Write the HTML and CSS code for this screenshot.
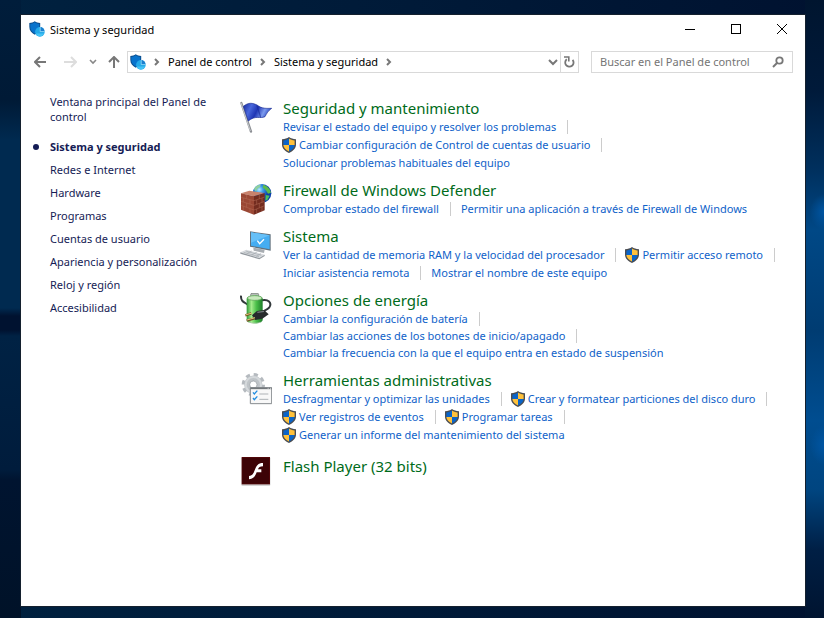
FILE: index.html
```html
<!DOCTYPE html>
<html lang="es">
<head>
<meta charset="utf-8">
<title>Sistema y seguridad</title>
<meta name="viewport" content="width=device-width, initial-scale=1">
<link rel="stylesheet" href="styles.css">
</head>
<body>
<svg class="defs" aria-hidden="true">
  <symbol id="uac" viewBox="0 0 14 16">
    <path d="M7 0C5 1.400 3 2 0 2.200V7.500C0 11.500 3 14.300 7 16C11 14.300 14 11.500 14 7.500V2.200C11 2 9 1.400 7 0Z" fill="#4a4d52"/>
    <path d="M7 1.500V8H1.400V3.400C3.700 3.200 5.500 2.600 7 1.500Z" fill="#0a64c8"/>
    <path d="M7 1.500V8H12.600V3.400C10.300 3.200 8.500 2.600 7 1.500Z" fill="#ffc13b"/>
    <path d="M1.400 8H7V14.500C3.800 13 1.600 11 1.400 8Z" fill="#ffc13b"/>
    <path d="M12.600 8H7V14.500C10.200 13 12.400 11 12.600 8Z" fill="#0a64c8"/>
  </symbol>
  <symbol id="security" viewBox="0 0 48 50">
    <path d="M17 1C12 5 7 6 0 6V18C0 30 7 38 17 43C27 38 34 30 34 18V6C27 6 22 5 17 1Z" fill="#0b4f8f"/>
    <path d="M17 4C12 8 8 9 3 9V18C3 28 9 35 17 39C25 35 31 28 31 18V9C26 9 22 8 17 4Z" fill="#0873cc"/>
    <circle cx="33" cy="34" r="15" fill="#23a9e8"/>
    <path d="M20 39A14 14 0 0 0 46 39Z" fill="#45c3f5"/>
    <path d="M35 32V19A14 14 0 0 1 47 32Z" fill="#1b7fce"/>
    <path d="M34 19V33H47" fill="none" stroke="#b5e6fb" stroke-width="2"/>
  </symbol>
  <symbol id="chevron" viewBox="0 0 6 8">
    <path d="M1 1L4 4L1 7" fill="none" stroke="#777" stroke-width="2"/>
  </symbol>
</svg>

<div class="window">
  <header class="titlebar">
    <svg class="app-icon"><use href="#security"/></svg>
    <h1 class="title">Sistema y seguridad</h1>
    <div class="captions">
      <button type="button" aria-label="Minimizar"><svg width="10" height="10" viewBox="0 0 10 10"><path d="M0 5.500H10" stroke="#000"/></svg></button>
      <button type="button" aria-label="Maximizar"><svg width="10" height="10" viewBox="0 0 10 10"><rect x=".5" y=".5" width="9" height="9" fill="none" stroke="#000"/></svg></button>
      <button type="button" aria-label="Cerrar"><svg width="10" height="10" viewBox="0 0 10 10"><path d="M0 0L10 10M10 0L0 10" stroke="#000"/></svg></button>
    </div>
  </header>

  <nav class="toolbar" aria-label="Navegación">
    <div class="history">
      <button type="button" class="wide" aria-label="Atrás"><svg width="13" height="12" viewBox="0 0 13 12"><path d="M1 6H12M6 1L1 6L6 11" fill="none" stroke="#777" stroke-width="2"/></svg></button>
      <button type="button" class="wide" aria-label="Adelante"><svg width="13" height="12" viewBox="0 0 13 12"><path d="M0 6H12M7 1L12 6L7 11" fill="none" stroke="#ddd" stroke-width="2"/></svg></button>
      <button type="button" class="narrow" aria-label="Ubicaciones recientes"><svg width="8" height="6" viewBox="0 0 8 6"><path d="M1 1L4 4L7 1" fill="none" stroke="#888" stroke-width="1.600"/></svg></button>
      <button type="button" class="medium" aria-label="Subir"><svg width="12" height="13" viewBox="0 0 12 13"><path d="M6 12V1M1 6L6 1L11 6" fill="none" stroke="#777" stroke-width="2"/></svg></button>
    </div>
    <div class="address">
      <svg class="app-icon"><use href="#security"/></svg>
      <svg class="chev"><use href="#chevron"/></svg>
      <a href="#panel">Panel de control</a>
      <svg class="chev"><use href="#chevron"/></svg>
      <a href="#seguridad">Sistema y seguridad</a>
      <svg class="chev"><use href="#chevron"/></svg>
      <button type="button" class="drop" aria-label="Ubicaciones anteriores"><svg width="10" height="7" viewBox="0 0 10 7"><path d="M1 1L5 5L9 1" fill="none" stroke="#777" stroke-width="2"/></svg></button>
      <button type="button" class="refresh" aria-label="Actualizar"><svg width="11" height="12" viewBox="0 0 11 12"><path d="M2.800 3.200A4.200 4.200 0 1 0 8.600 3.800" fill="none" stroke="#777" stroke-width="1.800"/><path d="M0 1H4.800V5.600" fill="none" stroke="#777" stroke-width="1.600"/></svg></button>
    </div>
    <label class="search">
      <input type="search" placeholder="Buscar en el Panel de control" aria-label="Buscar en el Panel de control">
      <svg width="12" height="12" viewBox="0 0 12 12"><circle cx="7.500" cy="4.500" r="3.200" fill="none" stroke="#777" stroke-width="1.800"/><path d="M5 7L1 11" stroke="#777" stroke-width="2"/></svg>
    </label>
  </nav>

  <div class="content">
    <aside class="sidebar">
      <a class="home" href="#panel">Ventana principal del Panel de control</a>
      <ul>
        <li class="current"><a href="#seguridad">Sistema y seguridad</a></li>
        <li><a href="#redes">Redes e Internet</a></li>
        <li><a href="#hardware">Hardware</a></li>
        <li><a href="#programas">Programas</a></li>
        <li><a href="#cuentas">Cuentas de usuario</a></li>
        <li><a href="#apariencia">Apariencia y personalización</a></li>
        <li><a href="#reloj">Reloj y región</a></li>
        <li><a href="#accesibilidad">Accesibilidad</a></li>
      </ul>
    </aside>

    <main class="categories">
      <section class="category">
        <svg class="icon" viewBox="24 30 96 96">
          <defs><linearGradient id="flag" x1="0" x2="1" y1="0" y2=".3"><stop offset="0" stop-color="#16299b"/><stop offset=".3" stop-color="#4a68dc"/><stop offset=".55" stop-color="#1f35b4"/><stop offset=".8" stop-color="#7d9bee"/><stop offset="1" stop-color="#2a48c4"/></linearGradient></defs>
          <path d="M28 36L57 122" stroke="#8c8f94" stroke-width="7" stroke-linecap="round"/>
          <path d="M27 36L55 120" stroke="#e3e5e8" stroke-width="2"/>
          <path d="M34 46C50 33 62 36 75 42C90 54 104 52 119 52C108 60 105 66 99 77C84 84 70 72 49 90Z" fill="url(#flag)" stroke="#1a2c92" stroke-width="2"/>
          <path d="M75 44C79 58 83 68 86 79" fill="none" stroke="#182a9a" stroke-width="4" opacity=".6"/>
        </svg>
        <div class="body">
          <h2><a href="#mantenimiento">Seguridad y mantenimiento</a></h2>
          <p class="row"><a href="#t1">Revisar el estado del equipo y resolver los problemas</a><i></i></p>
          <p class="row"><a class="uac" href="#t2"><svg><use href="#uac"/></svg>Cambiar configuración de Control de cuentas de usuario</a><i></i></p>
          <p class="row"><a href="#t3">Solucionar problemas habituales del equipo</a></p>
        </div>
      </section>

      <section class="category">
        <svg class="icon" viewBox="24 272 96 96">
          <defs><radialGradient id="globe" cx=".35" cy=".3"><stop offset="0" stop-color="#b8eaff"/><stop offset=".4" stop-color="#3e9fe8"/><stop offset="1" stop-color="#0a3fac"/></radialGradient></defs>
          <circle cx="90" cy="303" r="28" fill="url(#globe)"/>
          <path d="M66 290C70 281 78 277 86 277L84 284L76 290L72 298Z" fill="#8fd0a0"/>
          <path d="M94 277C106 280 115 290 117 301L108 304L103 296L98 290L92 286Z" fill="#5cba4c"/>
          <path d="M101 308L113 310L106 323L100 325Z" fill="#4fc05c"/>
          <path d="M27 303L52 295L98 302L66 312Z" fill="#c9826c"/>
          <path d="M27 303L66 312V367L27 352Z" fill="#9a4734"/>
          <path d="M66 312L98 302V354L66 367Z" fill="#732c1f"/>
          <path d="M27 315L66 325L98 314M27 327L66 339L98 327M27 339L66 353L98 340M44 307V319M34 317V329M54 322V335M44 332V345M34 342V355M54 349V362M82 307V320M74 323V336M90 317V330M82 333V346M74 350V363M90 343V357" fill="none" stroke="#b46c57" stroke-width="1.500"/>
        </svg>
        <div class="body">
          <h2><a href="#firewall">Firewall de Windows Defender</a></h2>
          <p class="row"><a href="#t4">Comprobar estado del firewall</a><i></i><a href="#t5">Permitir una aplicación a través de Firewall de Windows</a></p>
        </div>
      </section>

      <section class="category">
        <svg class="icon" viewBox="24 21 96 96">
          <path d="M64 77L98 83L96 93L65 86Z" fill="#a8adb2"/>
          <path d="M54 28L116 37V86L54 74Z" fill="#62717d"/>
          <path d="M57 31L113 40V82L57 71Z" fill="#45adf2"/>
          <path d="M57 31L113 40L57 62Z" fill="#66c0f8"/>
          <path d="M76 56L83 65L96 52" fill="none" stroke="#fff" stroke-width="4"/>
          <path d="M25 91L43 83L98 98L82 108Z" fill="#d9dce0"/>
          <path d="M25 91V95L82 112L98 102V98L82 108Z" fill="#92989e"/>
          <path d="M35 91L81 104M41 87L88 100M44 95L59 87M59 99L74 91M73 103L87 95" stroke="#a3a9ae" stroke-width="2"/>
        </svg>
        <div class="body">
          <h2><a href="#sistema">Sistema</a></h2>
          <p class="row"><a href="#t6">Ver la cantidad de memoria RAM y la velocidad del procesador</a><i></i><a class="uac" href="#t7"><svg><use href="#uac"/></svg>Permitir acceso remoto</a><i></i></p>
          <p class="row"><a href="#t8">Iniciar asistencia remota</a><i></i><a href="#t9">Mostrar el nombre de este equipo</a></p>
        </div>
      </section>

      <section class="category compact">
        <svg class="icon" viewBox="24 213 96 96">
          <defs><linearGradient id="cell"><stop offset="0" stop-color="#2f9a35"/><stop offset=".3" stop-color="#a4ec8c"/><stop offset=".6" stop-color="#4cc04a"/><stop offset="1" stop-color="#1c7d28"/></linearGradient></defs>
          <path d="M27 221C26 238 36 240 47 248M90 235C108 231 121 242 112 256C106 264 98 264 92 270" fill="none" stroke="#32383b" stroke-width="6"/>
          <rect x="56" y="214" width="24" height="12" rx="4" fill="#b7bdb9" stroke="#69716c" stroke-width="2"/>
          <path d="M44 230C46 217 90 217 92 230V294C90 308 46 308 44 294Z" fill="url(#cell)"/>
          <ellipse cx="68" cy="228" rx="22" ry="7" fill="#c8e9bd" stroke="#589f52" stroke-width="2"/>
          <path d="M46 298C56 304 80 304 90 298C86 307 50 307 46 298Z" fill="#b9c2ba"/>
          <path d="M60 280L75 267L96 264L110 277L91 290L70 294Z" fill="#272b2c"/>
          <path d="M76 271L96 268" stroke="#747c7e" stroke-width="4"/>
          <path d="M58 274L40 280M68 289L44 296" stroke="#6c5424" stroke-width="7"/>
          <path d="M60 273L40 279M69 287L45 294" stroke="#e3c97d" stroke-width="3"/>
        </svg>
        <div class="body">
          <h2><a href="#energia">Opciones de energía</a></h2>
          <p class="row"><a href="#t10">Cambiar la configuración de batería</a><i></i></p>
          <p class="row"><a href="#t11">Cambiar las acciones de los botones de inicio/apagado</a><i></i></p>
          <p class="row"><a href="#t12">Cambiar la frecuencia con la que el equipo entra en estado de suspensión</a></p>
        </div>
      </section>

      <section class="category">
        <svg class="icon" viewBox="24 24 96 96">
          <circle cx="64" cy="59" r="29" fill="none" stroke="#b5babf" stroke-width="12" stroke-dasharray="12 10.800"/>
          <circle cx="64" cy="59" r="19" fill="none" stroke="#bfc4c8" stroke-width="17"/>
          <circle cx="64" cy="59" r="23" fill="none" stroke="#d5d9dc" stroke-width="6"/>
          <circle cx="64" cy="59" r="11" fill="#fff" stroke="#8c9399" stroke-width="2"/>
          <path d="M55 68H119V116H55Z" fill="#f8f8f8" stroke="#858a8e" stroke-width="3"/>
          <path d="M55 70H119" stroke="#73787c" stroke-width="5"/>
          <path d="M107 70H110M114 70H117" stroke="#fff" stroke-width="2"/>
          <path d="M63 82L67 87L76 77M63 99L67 104L76 94" fill="none" stroke="#238ee0" stroke-width="4"/>
          <path d="M82 87H109M82 103H109" stroke="#aeb2b6" stroke-width="3"/>
        </svg>
        <div class="body">
          <h2><a href="#herramientas">Herramientas administrativas</a></h2>
          <p class="row"><a href="#t13">Desfragmentar y optimizar las unidades</a><i></i><a class="uac" href="#t14"><svg><use href="#uac"/></svg>Crear y formatear particiones del disco duro</a><i></i></p>
          <p class="row"><a class="uac" href="#t15"><svg><use href="#uac"/></svg>Ver registros de eventos</a><i></i><a class="uac" href="#t16"><svg><use href="#uac"/></svg>Programar tareas</a><i></i></p>
          <p class="row"><a class="uac" href="#t17"><svg><use href="#uac"/></svg>Generar un informe del mantenimiento del sistema</a></p>
        </div>
      </section>

      <section class="category single">
        <svg class="icon" viewBox="24 267 96 96">
          <rect x="28" y="274" width="87" height="85" rx="3" fill="#000" opacity=".22"/>
          <rect x="29" y="273" width="85" height="82" fill="#5b0a0c"/>
          <rect x="31" y="275" width="81" height="78" fill="#3d0306"/>
          <path d="M93 291V301C84 301 80 305 78 310H88V319H74C69 333 63 339 51 340V330C60 330 64 324 68 313C73 299 78 291 93 291Z" fill="#fff"/>
        </svg>
        <div class="body"><h2><a href="#flash">Flash Player (32 bits)</a></h2></div>
      </section>
    </main>
  </div>
</div>
</body>
</html>
```
FILE: styles.css
```css
* {
  box-sizing: border-box;
}

body {
  margin: 0;
  min-height: 100vh;
  display: flex;
  padding: 15px 19px 12px 21px;
  font: 11px/18px "Noto Sans", "Segoe UI", sans-serif;
  color: #000;
  background-color: #001a38;
  background-image:
    radial-gradient(ellipse 14px 18px at 100% 212px, #0055a2, transparent),
    radial-gradient(ellipse 14px 20px at 100% 445px, #0055a2, transparent),
    linear-gradient(#00152f 0, #001a3a 90px, #00305e 170px, #004886 230px, #003c72 330px, #004d90 420px, #004580 490px, #001f45 550px, #001430 618px),
    linear-gradient(#001d3b 0, #001a36 100px, #002a50 140px, #002a50 308px, #001230 316px, #001230 330px, #002244 336px, #001c3c 470px, #001430 480px, #001228 618px),
    linear-gradient(90deg, #00213f, #001a38 50%, #001230);
  background-size: 19px 100%, 19px 100%, 19px 100%, 21px 100%, 100% 100%;
  background-position: right top, right top, right top, left top, left top;
  background-repeat: no-repeat;
}

a {
  color: inherit;
  text-decoration: none;
}

a:hover {
  text-decoration: underline;
}

button {
  display: flex;
  align-items: center;
  justify-content: center;
  padding: 0;
  border: 0;
  background: none;
}

h1,
h2,
p,
ul {
  margin: 0;
  padding: 0;
  font-weight: 400;
}

.defs {
  position: absolute;
  width: 0;
  height: 0;
}

.window {
  flex: 1;
  min-width: 0;
  background: #fff;
  outline: 1px solid #14202e;
}

.titlebar {
  display: flex;
  align-items: center;
  height: 28px;
  padding-left: 8px;
}

.app-icon {
  flex: none;
  width: 16px;
  height: 16px;
}

.title {
  flex: 1;
  margin-left: 5px;
  padding-top: 2px;
  font-size: 11px;
}

.captions {
  display: flex;
}

.captions button {
  width: 46px;
  height: 28px;
}

.toolbar {
  display: flex;
  height: 22px;
  margin: 8px 12px 0 4px;
}

.history {
  display: flex;
}

.wide {
  width: 30px;
}

.narrow {
  width: 16px;
}

.medium {
  width: 26px;
}

.address {
  flex: 1;
  display: flex;
  align-items: center;
  border: 1px solid #d9d9d9;
  padding-left: 2px;
  white-space: nowrap;
}

.chev {
  width: 6px;
  height: 8px;
  margin: 0 8px;
}

.drop {
  width: 14px;
  height: 20px;
  margin-left: auto;
}

.refresh {
  width: 18px;
  height: 20px;
  border-left: 1px solid #d9d9d9;
}

.search {
  display: flex;
  align-items: center;
  width: 202px;
  margin-left: 12px;
  padding: 0 8px;
  border: 1px solid #d9d9d9;
}

.search input {
  flex: 1;
  min-width: 0;
  padding: 0;
  border: 0;
  outline: 0;
  background: none;
  font: inherit;
}

.search input::placeholder {
  color: #757575;
  opacity: 1;
}

.content {
  display: flex;
  padding: 21px 0 24px;
}

.sidebar {
  flex: none;
  width: 219px;
  padding: 0 20px 0 29px;
  color: #151c55;
}

.home {
  display: block;
  line-height: 15px;
}

.sidebar ul {
  margin-top: 11px;
  list-style: none;
}

.sidebar li {
  line-height: 23px;
  white-space: nowrap;
}

.current {
  display: flex;
  align-items: center;
  font-weight: 700;
}

.current::before {
  content: "";
  width: 6px;
  height: 6px;
  margin: 0 11px 0 -17px;
  border-radius: 50%;
  background: #151c55;
}

.categories {
  flex: 1;
  min-width: 0;
  padding-top: 4px;
}

.category {
  display: flex;
  gap: 11px;
  margin-bottom: 8px;
}

.icon {
  flex: none;
  width: 32px;
  height: 32px;
  margin-top: 3px;
}

/* The icon may hang below a short category without pushing the next one. */
.category .icon {
  margin-bottom: -8px;
}

.body {
  min-width: 0;
}

h2 {
  font-size: 15px;
  line-height: 20px;
  color: #006b1a;
  white-space: nowrap;
}

.row {
  display: flex;
  align-items: center;
  color: #0f62c9;
  white-space: nowrap;
}

.row i {
  width: 1px;
  height: 14px;
  margin: 0 10px 0 11px;
  background: #ccc;
}

.compact {
  margin-bottom: 9px;
}

.compact .row {
  line-height: 17px;
}

.uac {
  display: flex;
  align-items: center;
  margin-left: -1px;
}

.uac svg {
  width: 14px;
  height: 16px;
  margin-right: 3px;
}

.single h2 {
  line-height: 28px;
}
```
